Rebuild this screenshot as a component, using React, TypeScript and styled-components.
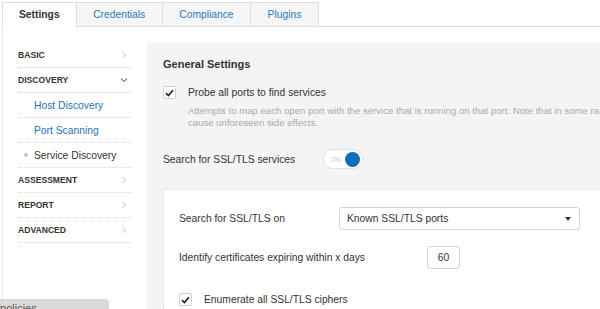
import styled, { createGlobalStyle } from 'styled-components';

const GlobalStyle = createGlobalStyle`
  html, body {
    margin: 0;
    padding: 0;
    overflow: hidden;
    background: #fff;
  }
  body {
    font-family: "Liberation Sans", Arial, sans-serif;
    color: #333;
  }
`;

const Page = styled.div`
  width: 1000px;
  height: 309px;
  padding-left: 2px;
  overflow: hidden;
`;

const TabBar = styled.div`
  display: flex;
  padding-top: 2px;
  border-bottom: 1px solid #ddd;
`;

const Tab = styled.div<{ $active?: boolean }>`
  height: 23px;
  margin-bottom: -1px;
  margin-right: -1px;
  padding: 0 16.5px;
  display: flex;
  align-items: center;
  font-size: 10.3px;
  font-weight: ${(p) => (p.$active ? 'bold' : 'normal')};
  color: ${(p) => (p.$active ? '#333' : '#2a7ab8')};
  background: ${(p) => (p.$active ? '#fff' : '#f5f5f5')};
  border: 1px solid #ddd;
  border-bottom-color: ${(p) => (p.$active ? '#fff' : '#ddd')};
  &:first-child {
    padding: 0 16px;
  }
`;

const Content = styled.div`
  display: flex;
  padding-top: 16px;
  border-left: 1px solid #e6e6e6;
  height: 300px;
`;

const Sidebar = styled.ul`
  width: 113px;
  flex-shrink: 0;
  margin: 0;
  padding: 0 16px 0 15px;
  list-style: none;
`;

const NavItem = styled.li<{ $sub?: boolean; $current?: boolean }>`
  height: 24px;
  display: flex;
  align-items: center;
  justify-content: space-between;
  border-bottom: 1px dotted #d8d8d8;
  padding-left: ${(p) => (p.$sub ? '16px' : '0')};
  font-size: ${(p) => (p.$sub ? '10.3px' : '8.6px')};
  font-weight: ${(p) => (p.$sub ? 'normal' : 'bold')};
  color: ${(p) => (p.$sub && !p.$current ? '#2673b0' : '#333')};
  position: relative;
`;

const Bullet = styled.span`
  position: absolute;
  left: 6px;
  top: 10px;
  width: 4px;
  height: 4px;
  border-radius: 50%;
  background: #c4c4c4;
`;

const ChevronRight = () => (
  <svg width="6" height="8" viewBox="0 0 6 8" style={{ marginRight: 4 }}>
    <polyline points="1.5,1 4.5,4 1.5,7" fill="none" stroke="#c2c2c2" strokeWidth="1" />
  </svg>
);

const ChevronDown = () => (
  <svg width="8" height="6" viewBox="0 0 8 6" style={{ marginRight: 3 }}>
    <polyline points="1,1.5 4,4.5 7,1.5" fill="none" stroke="#5aa55a" strokeWidth="1.2" />
  </svg>
);

const Main = styled.div`
  flex: 1;
  background: #f4f4f4;
  padding: 14px 0 0 16px;
`;

const Title = styled.h2`
  margin: 0;
  font-size: 11px;
  line-height: 14px;
  font-weight: bold;
  color: #333;
`;

const CheckRow = styled.div<{ $top: number }>`
  display: flex;
  align-items: center;
  gap: 12px;
  margin-top: ${(p) => p.$top}px;
`;

const Box = styled.span`
  width: 11px;
  height: 11px;
  border: 1px solid #d0d0d0;
  border-radius: 2px;
  background: #fff;
  display: flex;
  align-items: center;
  justify-content: center;
  flex-shrink: 0;
`;

const Checkbox = () => (
  <Box>
    <svg width="9" height="8" viewBox="0 0 9 8">
      <path d="M1 4.2 L3.4 6.6 L8 1.2" fill="none" stroke="#222" strokeWidth="1.7" />
    </svg>
  </Box>
);

const Label = styled.span<{ $width?: number }>`
  font-size: 10.3px;
  line-height: 13px;
  color: #333;
  white-space: nowrap;
  width: ${(p) => (p.$width ? `${p.$width}px` : 'auto')};
  flex-shrink: 0;
`;

const Description = styled.p`
  margin: 6px 0 0 25px;
  font-size: 9.6px;
  line-height: 12px;
  color: #aaa;
  white-space: nowrap;
`;

const Row = styled.div<{ $top: number }>`
  display: flex;
  align-items: center;
  margin-top: ${(p) => p.$top}px;
`;

const Toggle = styled.div`
  height: 18px;
  border: 1px solid #e0e0e0;
  border-radius: 10px;
  background: #fff;
  display: flex;
  align-items: center;
  justify-content: space-between;
  padding: 0 2px 0 7px;
  box-sizing: content-box;
  width: 29px;
`;

const ToggleText = styled.span`
  font-size: 6.5px;
  color: #ccc;
`;

const Knob = styled.span`
  width: 15px;
  height: 15px;
  border-radius: 50%;
  background: #0a6ebd;
`;

const SubPanel = styled.div`
  margin-top: 20px;
  background: #fff;
  border-top: 1px dotted #d8d8d8;
  border-left: 1px dotted #d8d8d8;
  padding: 17px 0 0 15px;
  height: 200px;
`;

const Select = styled.div`
  width: 224px;
  height: 21px;
  border: 1px solid #d6d6d6;
  border-radius: 3px;
  background: #fff;
  display: flex;
  align-items: center;
  justify-content: space-between;
  padding: 0 8px 0 7px;
  font-size: 10.3px;
  color: #333;
`;

const Caret = styled.span`
  width: 0;
  height: 0;
  border-left: 3.5px solid transparent;
  border-right: 3.5px solid transparent;
  border-top: 4px solid #333;
`;

const NumberInput = styled.div`
  width: 31px;
  height: 21px;
  border: 1px solid #d6d6d6;
  border-radius: 3px;
  background: #fff;
  display: flex;
  align-items: center;
  justify-content: center;
  font-size: 10.3px;
  color: #333;
`;

const StatusBubble = styled.div`
  position: fixed;
  left: 0;
  bottom: -8px;
  width: 101px;
  height: 18px;
  padding-left: 8px;
  background: #d9d9d9;
  border-top-right-radius: 4px;
  font-size: 11px;
  line-height: 18px;
  color: #555;
  text-indent: -11px;
  overflow: hidden;
`;

const navItems = [
  { label: 'BASIC', kind: 'section' },
  { label: 'DISCOVERY', kind: 'open' },
  { label: 'Host Discovery', kind: 'sub' },
  { label: 'Port Scanning', kind: 'sub' },
  { label: 'Service Discovery', kind: 'current' },
  { label: 'ASSESSMENT', kind: 'section' },
  { label: 'REPORT', kind: 'section' },
  { label: 'ADVANCED', kind: 'section' },
];

const tabs = ['Settings', 'Credentials', 'Compliance', 'Plugins'];

export default function App() {
  return (
    <>
      <GlobalStyle />
      <Page>
        <TabBar>
          {tabs.map((t, i) => (
            <Tab key={t} $active={i === 0}>{t}</Tab>
          ))}
        </TabBar>
        <Content>
          <Sidebar>
            {navItems.map((item) => {
              const sub = item.kind === 'sub' || item.kind === 'current';
              return (
                <NavItem key={item.label} $sub={sub} $current={item.kind === 'current'}>
                  {item.kind === 'current' && <Bullet />}
                  <span>{item.label}</span>
                  {item.kind === 'section' && <ChevronRight />}
                  {item.kind === 'open' && <ChevronDown />}
                </NavItem>
              );
            })}
          </Sidebar>
          <Main>
            <Title>General Settings</Title>
            <CheckRow $top={15}>
              <Checkbox />
              <Label>Probe all ports to find services</Label>
            </CheckRow>
            <Description>
              Attempts to map each open port with the service that is running on that port. Note that in some rare cases, probing might disrupt some services and
              <br />
              cause unforeseen side effects.
            </Description>
            <Row $top={20}>
              <Label $width={160}>Search for SSL/TLS services</Label>
              <Toggle>
                <ToggleText>ON</ToggleText>
                <Knob />
              </Toggle>
            </Row>
            <SubPanel>
              <Row $top={0}>
                <Label $width={160}>Search for SSL/TLS on</Label>
                <Select>
                  <span>Known SSL/TLS ports</span>
                  <Caret />
                </Select>
              </Row>
              <Row $top={16}>
                <Label $width={248}>Identify certificates expiring within x days</Label>
                <NumberInput>60</NumberInput>
              </Row>
              <CheckRow $top={24}>
                <Checkbox />
                <Label>Enumerate all SSL/TLS ciphers</Label>
              </CheckRow>
            </SubPanel>
          </Main>
        </Content>
      </Page>
      <StatusBubble>/policies</StatusBubble>
    </>
  );
}
